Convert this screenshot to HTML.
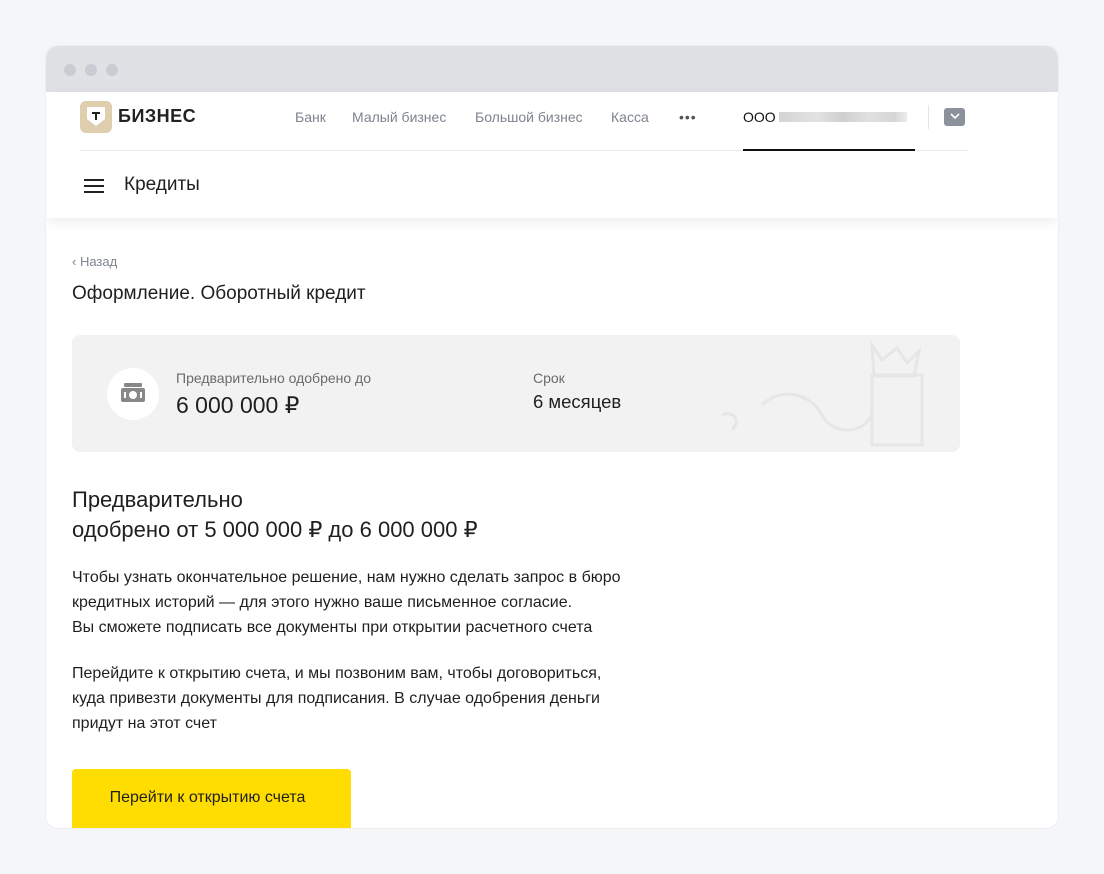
<!DOCTYPE html>
<html><head><meta charset="utf-8"><style>
*{margin:0;padding:0;box-sizing:border-box}
body{width:1104px;height:874px;background:#f5f6f8;font-family:"Liberation Sans",sans-serif;color:#1f1f1f;position:relative;overflow:hidden}
.win{position:absolute;left:46px;top:46px;width:1012px;height:782px;background:#fff;border-radius:12px;overflow:hidden;box-shadow:0 0 0 1px #eceef1}
.bar{height:46px;background:#dfe1e5;position:relative}
.dot{position:absolute;top:18px;width:12px;height:12px;border-radius:50%;background:#c9ccd2}
.hdr{position:absolute;top:46px;left:0;width:1012px;height:126px;background:#fff;box-shadow:0 4px 12px rgba(0,0,0,.07);z-index:2}
.abs{position:absolute}
.p{font-size:16px;line-height:25px;color:#1f1f1f}
.n{font-size:14px;color:#7d848e;top:17px}
</style></head><body>
<div class="win">
<div class="bar"><div class="dot" style="left:18px"></div><div class="dot" style="left:39px"></div><div class="dot" style="left:60px"></div></div>
<div class="hdr">
 <div class="abs" style="left:34px;top:9px;width:32px;height:32px;border-radius:6px;background:#e0cfae"></div>
 <svg class="abs" style="left:40px;top:14px" width="20" height="22" viewBox="0 0 20 22"><path d="M1 1h18v12l-9 7-9-7z" fill="#fff"/><path d="M6 6h8v2h-3v6h-2V8H6z" fill="#222"/></svg>
 <div class="abs" style="left:72px;top:14px;font-size:18px;font-weight:900;letter-spacing:.5px;color:#222">БИЗНЕС</div>
 <div class="abs n" style="left:249px">Банк</div>
 <div class="abs n" style="left:306px">Малый бизнес</div>
 <div class="abs n" style="left:429px">Большой бизнес</div>
 <div class="abs n" style="left:565px">Касса</div>
 <div class="abs" style="left:633px;top:17px;font-size:14px;color:#555;letter-spacing:1px">•••</div>
 <div class="abs" style="left:697px;top:17px;font-size:14px;color:#111">ООО</div>
 <div class="abs" style="left:733px;top:20px;width:128px;height:10px;background:linear-gradient(90deg,#d4d4d4,#e2e2e2 30%,#cfcfcf 50%,#e0e0e0 70%,#d6d6d6 90%,#ececec)"></div>
 <div class="abs" style="left:882px;top:13px;width:1px;height:24px;background:#e5e5e5"></div>
 <div class="abs" style="left:898px;top:16px;width:21px;height:18px;border-radius:3px;background:#8c929b"></div>
 <svg class="abs" style="left:904px;top:21px" width="10" height="7"><path d="M1 1l4 4 4-4" stroke="#fff" stroke-width="1.6" fill="none"/></svg>
 <div class="abs" style="left:34px;top:58px;width:888px;height:1px;background:#ececec"></div>
 <div class="abs" style="left:697px;top:57px;width:172px;height:2px;background:#111"></div>
 <div class="abs" style="left:38px;top:87px;width:20px;height:2px;background:#222;box-shadow:0 6px 0 #222,0 12px 0 #222"></div>
 <div class="abs" style="left:78px;top:82px;font-size:19px;color:#1f1f1f">Кредиты</div>
</div>
<div class="abs" style="left:26px;top:208px;font-size:13px;color:#7d848e">‹ Назад</div>
<div class="abs" style="left:26px;top:237px;font-size:19px">Оформление. Оборотный кредит</div>
<div class="abs" style="left:26px;top:289px;width:888px;height:117px;background:#f2f2f2;border-radius:8px;overflow:hidden">
 <svg class="abs" style="left:630px;top:0" width="258" height="117" viewBox="0 0 258 117" fill="none" stroke="#e6e6e6" stroke-width="3"><path d="M170 10l10 15 15-12 10 15 12-12-5 25h-40z"/><path d="M170 40h50v70h-50z"/><path d="M60 70c20-20 50-10 60 10s40 20 50 0"/><path d="M20 80c10-5 20 5 10 15"/></svg>
 <div class="abs" style="left:35px;top:33px;width:52px;height:52px;border-radius:50%;background:#fff"></div>
 <svg class="abs" style="left:48px;top:48px" width="26" height="20" viewBox="0 0 26 20"><rect x="4" y="0" width="18" height="4" rx="1" fill="#888"/><rect x="1" y="5" width="24" height="14" rx="2" fill="#888"/><circle cx="13" cy="12" r="4" fill="#fff"/><rect x="4" y="9" width="2" height="6" fill="#fff"/><rect x="20" y="9" width="2" height="6" fill="#fff"/></svg>
 <div class="abs" style="left:104px;top:35px;font-size:14px;color:#6b6b6b">Предварительно одобрено до</div>
 <div class="abs" style="left:104px;top:57px;font-size:23px">6 000 000 ₽</div>
 <div class="abs" style="left:461px;top:35px;font-size:14px;color:#6b6b6b">Срок</div>
 <div class="abs" style="left:461px;top:56px;font-size:18.5px">6 месяцев</div>
</div>
<div class="abs" style="left:26px;top:439px;font-size:22px;line-height:30px">Предварительно<br>одобрено от 5 000 000 ₽ до 6 000 000 ₽</div>
<div class="abs p" style="left:26px;top:519px">Чтобы узнать окончательное решение, нам нужно сделать запрос в бюро<br>кредитных историй — для этого нужно ваше письменное согласие.<br>Вы сможете подписать все документы при открытии расчетного счета</div>
<div class="abs p" style="left:26px;top:615px">Перейдите к открытию счета, и мы позвоним вам, чтобы договориться,<br>куда привезти документы для подписания. В случае одобрения деньги<br>придут на этот счет</div>
<div class="abs" style="left:26px;top:723px;width:279px;height:70px;background:#ffdd00;border-radius:4px;font-size:16px;padding-top:20px;text-align:center;padding-right:8px">Перейти к открытию счета</div>
</div>
</body></html>
